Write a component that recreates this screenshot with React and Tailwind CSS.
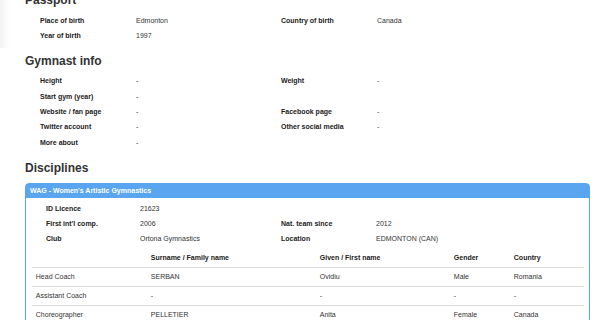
import React from 'react';

const passport = [
  ['Place of birth', 'Edmonton', 'Country of birth', 'Canada'],
  ['Year of birth', '1997', '', ''],
];

const gymnast = [
  ['Height', '-', 'Weight', '-'],
  ['Start gym (year)', '-', '', ''],
  ['Website / fan page', '-', 'Facebook page', '-'],
  ['Twitter account', '-', 'Other social media', '-'],
  ['More about', '-', '', ''],
];

const licence = [
  ['ID Licence', '21623', '', ''],
  ["First int'l comp.", '2006', 'Nat. team since', '2012'],
  ['Club', 'Ortona Gymnastics', 'Location', 'EDMONTON (CAN)'],
];

const staff = [
  ['Head Coach', 'SERBAN', 'Ovidiu', 'Male', 'Romania'],
  ['Assistant Coach', '-', '-', '-', '-'],
  ['Choreographer', 'PELLETIER', 'Anita', 'Female', 'Canada'],
];

// label / value pairs laid out in four columns
function InfoGrid({ rows, cols, className = '' }) {
  return (
    <div className={`grid ${cols} ${className}`}>
      {rows.map((r, i) => (
        <React.Fragment key={i}>
          <div className="h-[15.3px] leading-[15.3px] font-bold text-[#222]">{r[0]}</div>
          <div className="h-[15.3px] leading-[15.3px] text-[#333]">{r[1]}</div>
          <div className="h-[15.3px] leading-[15.3px] font-bold text-[#222]">{r[2]}</div>
          <div className="h-[15.3px] leading-[15.3px] text-[#333]">{r[3]}</div>
        </React.Fragment>
      ))}
    </div>
  );
}

function Heading({ children, className = '' }) {
  return (
    <h2 className={`h-[14px] leading-[14px] text-[12px] font-bold text-[#333] ${className}`}>
      {children}
    </h2>
  );
}

export default function App() {
  return (
    <div
      className="relative w-[600px] h-[320px] overflow-hidden bg-white text-[7px]"
      style={{ fontFamily: '"Liberation Sans", Arial, Helvetica, sans-serif' }}
    >
      <div className="absolute left-0 top-0 w-[10px] h-[48px] bg-gradient-to-r from-[#f2f2f2] to-transparent" />

      <div className="pl-[25px] pr-[10px]">
        <Heading className="-mt-[7px]">Passport</Heading>
        <InfoGrid
          rows={passport}
          cols="grid-cols-[96px_145px_96px_1fr]"
          className="mt-[5.5px] ml-[15px]"
        />

        <Heading className="mt-[10.8px]">Gymnast info</Heading>
        <InfoGrid
          rows={gymnast}
          cols="grid-cols-[96px_145px_96px_1fr]"
          className="mt-[5.5px] ml-[15px]"
        />

        <Heading className="mt-[11px]">Disciplines</Heading>

        <div className="mt-[8.5px] border border-[#5aa5ef] rounded-t-[4px]">
          <div className="h-[14px] leading-[14px] bg-[#5aa5ef] pl-[4px] font-bold text-white">
            WAG - Women's Artistic Gymnastics
          </div>
          <InfoGrid
            rows={licence}
            cols="grid-cols-[94px_141px_95px_1fr]"
            className="pt-[2.3px] pl-[20px]"
          />

          <table className="mt-[3px] ml-[6.3px] w-[552px] table-fixed border-collapse">
            <colgroup>
              <col className="w-[115px]" />
              <col className="w-[169px]" />
              <col className="w-[134px]" />
              <col className="w-[60px]" />
              <col />
            </colgroup>
            <thead>
              <tr className="h-[18px] border-b border-[#dddddd] font-bold text-[#222]">
                <th></th>
                <th className="px-[3.5px] text-left">Surname / Family name</th>
                <th className="px-[3.5px] text-left">Given / First name</th>
                <th className="px-[3.5px] text-left">Gender</th>
                <th className="px-[3.5px] text-left">Country</th>
              </tr>
            </thead>
            <tbody className="text-[#333]">
              {staff.map((r, i) => (
                <tr key={i} className="h-[19px] border-b border-[#dddddd]">
                  {r.map((c, j) => (
                    <td key={j} className="px-[3.5px]">{c}</td>
                  ))}
                </tr>
              ))}
            </tbody>
          </table>
        </div>
      </div>
    </div>
  );
}
